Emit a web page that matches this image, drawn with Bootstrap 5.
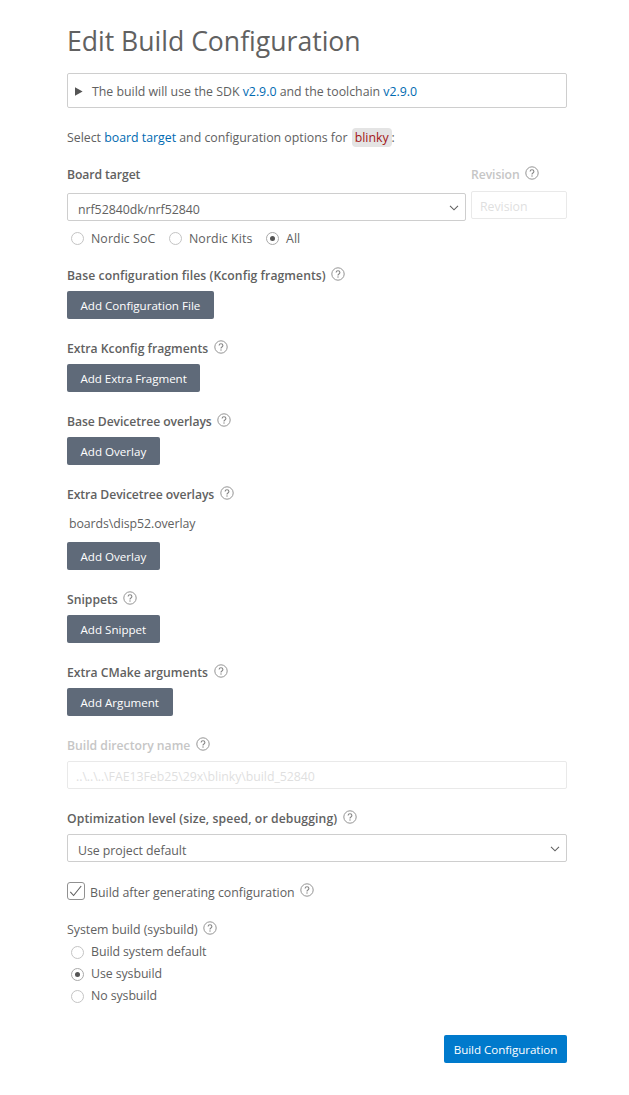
<!DOCTYPE html>
<html lang="en">
<head>
<meta charset="utf-8">
<title>Edit Build Configuration</title>
<link href="https://cdn.jsdelivr.net/npm/bootstrap@5.3.0/dist/css/bootstrap.min.css" rel="stylesheet">
<style>
  body { font: 12.35px/20px "Open Sans", "Noto Sans", sans-serif; letter-spacing: -.01px; color: #616161; background: #fff; }
  .page { width: 500px; margin-left: 67px; padding-top: 22px; }
  h1 { font-size: 26.6px; line-height: 38px; font-weight: 400; margin: 0 0 13px; }
  a { color: #006ab1; text-decoration: none; }
  .box { border: 1px solid #cecece; border-radius: 2px; background: #fff; }
  .sdk { height: 35px; padding-top: 2px; }
  .sdk svg { margin: 0 9px 0 7px; }
  .intro { margin-top: 20px; height: 20px; white-space: nowrap; }
  .intro code { font: inherit; color: #a31515; background: #e4e4e4; border-radius: 4px; padding: 1px 3px; margin-left: 1px; }
  .title { font-size: 12.2px; font-weight: 600; height: 20px; white-space: nowrap; letter-spacing: 0; }
  .title.plain { font-size: 12.35px; font-weight: 400; letter-spacing: -.02px; }
  .airy { letter-spacing: .06px; }
  .airy.wide { letter-spacing: .1px; }
  .snug { letter-spacing: -.08px; }
  .help { width: 14px; height: 14px; margin: .5px 0 0 5.5px; flex: none; align-self: flex-start; }
  .group { margin-bottom: 20px; }
  .group > .title { margin-bottom: 5px; }
  .group > .title:has(+ .overlay-file) { margin-bottom: 0; }
  .overlay-file { margin: 9px 0 8px 2px; height: 20px; letter-spacing: -.08px; }
  .target { margin: 17px 0 18px; }
  .btn { --bs-btn-font-size: 11.6px; --bs-btn-padding-y: 0; --bs-btn-padding-x: 13.5px; letter-spacing: 0;
         --bs-btn-border-width: 0; --bs-btn-border-radius: 2px; height: 28px; display: block; white-space: nowrap; padding-top: 1px; line-height: 27px; }
  .btn-slate { --bs-btn-color: #fff; --bs-btn-bg: #5f6a79; --bs-btn-hover-color: #fff; --bs-btn-hover-bg: #4c5561; }
  .btn-slate.tight { letter-spacing: -.06px; }
  .btn-build { --bs-btn-color: #fff; --bs-btn-bg: #007acc; --bs-btn-hover-color: #fff; --bs-btn-hover-bg: #0062a3; width: 123px; letter-spacing: -.05px; }
  .field { height: 28px; padding: 6px 6px 0 10px; letter-spacing: -.05px; }
  .field svg { margin-top: 5px; }
  .off { color: #c6c6c6; }
  .box.off { border-color: #e9e9e9; color: #dfdfdf; padding: 5px 6px 0 8px; }
  .revision { width: 96px; margin-left: 5px; }
  .revision .title { margin-bottom: 6px; }
  .dot { width: 13px; height: 13px; border: 1px solid #c4c4c4; border-radius: 50%; display: flex; align-items: center; justify-content: center; flex: none; margin-right: 7px; }
  .dot.on { border-color: #a9a9a9; }
  .dot.on::after { content: ""; width: 5px; height: 5px; border-radius: 50%; background: #555; }
  .choices { height: 20px; margin-top: 7px; padding-left: 4px; letter-spacing: .08px; }
  .choices .choice { padding-top: 1px; }
  .choices .dot { margin-top: -1px; }
  .choices .choice:nth-child(1) { width: 98px; }
  .choices .choice:nth-child(2) { width: 97px; }
  .stack { padding: 1px 0 0 4px; letter-spacing: -.08px; }
  .stack .choice { height: 22px; }
  .after { height: 20px; margin-top: -1px; }
  .after span + span { padding-top: 3px; }
  .after .help { margin-top: 2px; }
  .tick { width: 18px; height: 18px; border: 1px solid #919191; border-radius: 3px; margin-right: 5px; }
  .system { margin-top: 19px; }
  .actions { margin-top: 28px; }
</style>
</head>
<body>
<svg class="d-none">
  <symbol id="help" viewBox="0 0 14 14">
    <circle cx="7" cy="7" r="6.2" fill="none" stroke="#949494" stroke-width="1"/>
    <path d="M5.1 5.6C5.1 4.4 5.9 3.7 7 3.7s1.9.7 1.9 1.7c0 .8-.5 1.2-1 1.6-.6.4-.9.7-.9 1.5" fill="none" stroke="#858585" stroke-width="1.1"/>
    <circle cx="7" cy="10" r=".7" fill="#858585"/>
  </symbol>
  <symbol id="chevron" viewBox="0 0 10 6">
    <path d="M1 .8l4 4 4-4" fill="none" stroke="#616161" stroke-width="1.1"/>
  </symbol>
</svg>
<main class="page">
  <h1>Edit Build Configuration</h1>
  <div class="box sdk d-flex align-items-center">
    <svg width="8" height="9" viewBox="0 0 8 9"><path d="M0 .3l7.6 4.2L0 8.7z" fill="#555"/></svg>
    <span>The build will use the SDK <a href="#">v2.9.0</a> and the toolchain <a href="#">v2.9.0</a></span>
  </div>
  <p class="intro mb-0">Select <a href="#">board target</a> and configuration options for <code>blinky</code>:</p>

  <section class="target">
    <div class="d-flex">
      <div class="flex-grow-1">
        <div class="title snug mb-2">Board target</div>
        <div class="box field d-flex justify-content-between"><span>nrf52840dk/nrf52840</span><svg width="10" height="6"><use href="#chevron"/></svg></div>
      </div>
      <div class="revision">
        <div class="title snug off d-flex"><span>Revision</span><svg class="help"><use href="#help"/></svg></div>
        <div class="box field off">Revision</div>
      </div>
    </div>
    <div class="choices d-flex">
      <label class="choice d-flex align-items-center"><span class="dot"></span>Nordic SoC</label>
      <label class="choice d-flex align-items-center"><span class="dot"></span>Nordic Kits</label>
      <label class="choice d-flex align-items-center"><span class="dot on"></span>All</label>
    </div>
  </section>

  <section class="group">
    <div class="title airy d-flex"><span>Base configuration files (Kconfig fragments)</span><svg class="help"><use href="#help"/></svg></div>
    <button class="btn btn-slate">Add Configuration File</button>
  </section>
  <section class="group">
    <div class="title d-flex"><span>Extra Kconfig fragments</span><svg class="help"><use href="#help"/></svg></div>
    <button class="btn btn-slate tight">Add Extra Fragment</button>
  </section>
  <section class="group">
    <div class="title snug d-flex"><span>Base Devicetree overlays</span><svg class="help"><use href="#help"/></svg></div>
    <button class="btn btn-slate">Add Overlay</button>
  </section>
  <section class="group">
    <div class="title snug d-flex"><span>Extra Devicetree overlays</span><svg class="help"><use href="#help"/></svg></div>
    <div class="overlay-file">boards\disp52.overlay</div>
    <button class="btn btn-slate">Add Overlay</button>
  </section>
  <section class="group">
    <div class="title d-flex"><span>Snippets</span><svg class="help"><use href="#help"/></svg></div>
    <button class="btn btn-slate">Add Snippet</button>
  </section>
  <section class="group">
    <div class="title d-flex"><span>Extra CMake arguments</span><svg class="help"><use href="#help"/></svg></div>
    <button class="btn btn-slate">Add Argument</button>
  </section>
  <section class="group">
    <div class="title off d-flex"><span>Build directory name</span><svg class="help"><use href="#help"/></svg></div>
    <div class="box field off">..\..\..\FAE13Feb25\29x\blinky\build_52840</div>
  </section>
  <section class="group">
    <div class="title airy wide d-flex"><span>Optimization level (size, speed, or debugging)</span><svg class="help"><use href="#help"/></svg></div>
    <div class="box field d-flex justify-content-between"><span>Use project default</span><svg width="10" height="6"><use href="#chevron"/></svg></div>
  </section>
  <label class="after d-flex align-items-center">
    <span class="tick d-flex"><svg width="16" height="16" viewBox="0 0 16 16"><path d="M2.3 8.8l3.3 3.7L13.2 3" fill="none" stroke="#616161" stroke-width="1.1"/></svg></span>
    <span>Build after generating configuration</span><svg class="help"><use href="#help"/></svg>
  </label>
  <section class="system">
    <div class="title plain d-flex"><span>System build (sysbuild)</span><svg class="help"><use href="#help"/></svg></div>
    <div class="stack">
      <label class="choice d-flex align-items-center"><span class="dot"></span>Build system default</label>
      <label class="choice d-flex align-items-center"><span class="dot on"></span>Use sysbuild</label>
      <label class="choice d-flex align-items-center"><span class="dot"></span>No sysbuild</label>
    </div>
  </section>
  <div class="actions d-flex justify-content-end">
    <button class="btn btn-build px-2">Build Configuration</button>
  </div>
</main>
<script src="https://cdn.jsdelivr.net/npm/bootstrap@5.3.0/dist/js/bootstrap.bundle.min.js"></script>
</body>
</html>
